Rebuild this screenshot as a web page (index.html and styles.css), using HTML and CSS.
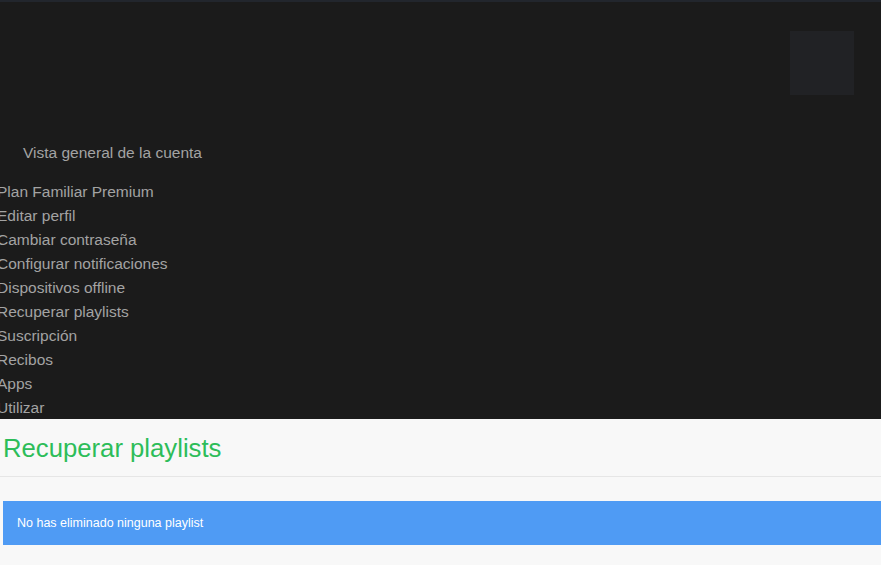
FILE: index.html
```html
<!DOCTYPE html>
<html>
<head>
    <title>Recuperar playlists</title>
    <link rel="stylesheet" href="styles.css">
</head>
<body>
    <header class="account-header">
        <div class="top-bar">
            <div class="avatar"></div>
        </div>
        <nav class="account-nav">
            <div class="nav-title">Vista general de la cuenta</div>
            <ul class="nav-list">
                <li>Plan Familiar Premium</li>
                <li>Editar perfil</li>
                <li>Cambiar contraseña</li>
                <li>Configurar notificaciones</li>
                <li>Dispositivos offline</li>
                <li>Recuperar playlists</li>
                <li>Suscripción</li>
                <li>Recibos</li>
                <li>Apps</li>
                <li>Utilizar</li>
            </ul>
        </nav>
    </header>

    <main class="content">
        <h1>Recuperar playlists</h1>
        <hr>
        <div class="alert">No has eliminado ninguna playlist</div>
    </main>
</body>
</html>
```

FILE: styles.css
```css
body {
    margin: 0;
    font-family: 'Liberation Sans', Arial, sans-serif;
    background-color: #f8f8f8;
    overflow: hidden;
}
.account-header {
    box-sizing: border-box;
    height: 419px;
    background-color: #1b1b1b;
    border-top: 2px solid #22262d;
}
.top-bar {
    display: flex;
    justify-content: flex-end;
    padding: 29px 27px 0 0;
    height: 110px;
}
.avatar {
    width: 64px;
    height: 64px;
    background-color: #212225;
}
.nav-title {
    color: #a3a3a3;
    font-size: 15.5px;
    line-height: 24px;
    padding-left: 23px;
    margin-bottom: 15px;
}
.nav-list {
    list-style: none;
    margin: 0 0 0 -3px;
    padding: 0;
}
.nav-list li {
    color: #a3a3a3;
    font-size: 15.5px;
    line-height: 24px;
}
.content {
    padding-top: 14px;
}
h1 {
    color: #2dbd59;
    font-size: 25.7px;
    font-weight: normal;
    line-height: 30px;
    margin: 0 0 0 3px;
}
hr {
    border: none;
    border-top: 1px solid #e6e6e6;
    margin: 13px 0 24px 0;
}
.alert {
    background-color: #4f9bf4;
    color: #fff;
    font-size: 12.5px;
    line-height: 44px;
    margin-left: 3px;
    padding-left: 14px;
}
```
